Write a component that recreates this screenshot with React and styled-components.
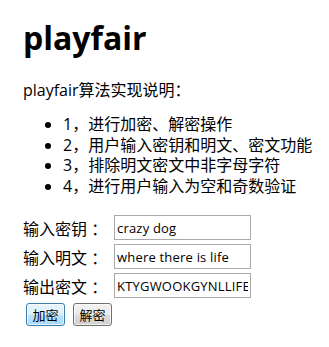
import React from "react";
import styled, { createGlobalStyle } from "styled-components";

const GlobalStyle = createGlobalStyle`
  body {
    margin: 8px;
    background: #fff;
    color: #000;
    font-family: "Open Sans", "Noto Sans CJK SC", sans-serif;
  }
`;

const Page = styled.div`
  padding-left: 15px;
`;

const Title = styled.h1`
  font-size: 32px;
  font-weight: 700;
  margin: 8px 0 21px;
  line-height: 43px;
`;

const Intro = styled.p`
  font-size: 16px;
  line-height: 21px;
  margin: 16px 0 13px;
`;

const Steps = styled.ul`
  margin: 13px 0 19px;
  padding-left: 40px;
  font-size: 16px;
  line-height: 20.5px;
`;

const Form = styled.div`
  display: flex;
  flex-direction: column;
  gap: 4px;
  margin-top: 19px;
`;

const Row = styled.div`
  display: flex;
  align-items: center;
`;

const Label = styled.label`
  width: 91px;
  font-size: 16px;
  white-space: pre;
`;

const Field = styled.input`
  box-sizing: border-box;
  width: 137px;
  height: 25px;
  padding: 0 2px;
  border: 1px solid #a9a9a9;
  font-family: "Open Sans", sans-serif;
  font-size: 13px;
  letter-spacing: 0.2px;
  color: #000;
  outline: none;
`;

const Actions = styled.div`
  display: flex;
  gap: 8px;
  padding-left: 3px;
  margin-top: 1px;
`;

const Button = styled.button`
  box-sizing: border-box;
  width: 39px;
  height: 23px;
  padding: 0;
  border-radius: 3px;
  font-family: "Noto Sans CJK SC", sans-serif;
  font-size: 13px;
  color: #000;
  border: 1px solid ${(p) => (p.$active ? "#3c7fb1" : "#707070")};
  background: ${(p) =>
    p.$active
      ? "linear-gradient(#eaf6fd 0%, #d9f0fc 50%, #bee6fd 51%, #a7d9f5 100%)"
      : "linear-gradient(#f2f2f2 0%, #ebebeb 50%, #dddddd 51%, #cfcfcf 100%)"};
  box-shadow: inset 0 0 0 1px rgba(255, 255, 255, 0.7);
`;

const fields = [
  { label: "输入密钥 ：", value: "crazy dog" },
  { label: "输入明文 ：", value: "where there is life" },
  { label: "输出密文 ：", value: "KTYGWOOKGYNLLIFE" },
];

export default function App() {
  return (
    <Page>
      <GlobalStyle />
      <Title>playfair</Title>
      <Intro>playfair算法实现说明：</Intro>
      <Steps>
        <li>1，进行加密、解密操作</li>
        <li>2，用户输入密钥和明文、密文功能</li>
        <li>3，排除明文密文中非字母字符</li>
        <li>4，进行用户输入为空和奇数验证</li>
      </Steps>
      <Form>
        {fields.map((f) => (
          <Row key={f.label}>
            <Label>{f.label}</Label>
            <Field defaultValue={f.value} readOnly />
          </Row>
        ))}
        <Actions>
          <Button $active>加密</Button>
          <Button>解密</Button>
        </Actions>
      </Form>
    </Page>
  );
}
